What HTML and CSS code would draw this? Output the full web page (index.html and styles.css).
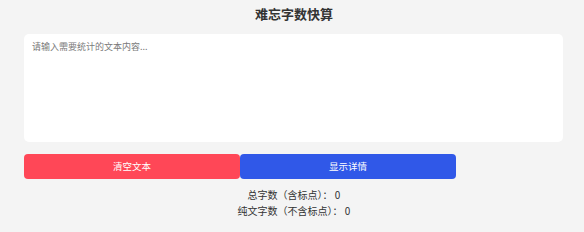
FILE: index.html
```html
<!DOCTYPE html>
<html lang="zh-CN">
<head>
<meta charset="utf-8">
<title>难忘字数快算</title>
<link rel="stylesheet" href="styles.css">
</head>
<body>
<div class="app">
  <h1 class="title">难忘字数快算</h1>
  <textarea class="input" placeholder="请输入需要统计的文本内容..." autofocus></textarea>
  <div class="actions">
    <button class="btn btn-clear">清空文本</button>
    <button class="btn btn-detail">显示详情</button>
  </div>
  <div class="stats">
    <div class="stat">总字数（含标点）： 0</div>
    <div class="stat">纯文字数（不含标点）： 0</div>
  </div>
</div>
</body>
</html>
```

FILE: styles.css
```css
html, body {
  margin: 0;
  padding: 0;
  background: #f4f4f4;
  font-family: "Noto Sans CJK SC", "Noto Sans", sans-serif;
  color: #333;
}

.app {
  width: 540px;
  margin-left: 24px;
  padding-top: 4px;
  display: flex;
  flex-direction: column;
}

.title {
  margin: 0 0 10px;
  font-size: 13px;
  line-height: 20px;
  font-weight: 700;
  text-align: center;
  color: #333;
}

.input {
  display: block;
  box-sizing: border-box;
  width: 539px;
  height: 108px;
  margin: 0;
  padding: 6px 8px;
  border: none;
  border-radius: 5px;
  background: #fff;
  resize: none;
  outline: none;
  font-family: "Noto Sans CJK SC", "Noto Sans", sans-serif;
  font-size: 9px;
  line-height: 14px;
  color: #333;
  caret-color: #3058e8;
}

.input::placeholder {
  color: #7a7a7a;
}

.actions {
  display: flex;
  margin-top: 12px;
}

.btn {
  flex: 0 0 216px;
  height: 25px;
  margin: 0;
  padding: 0;
  border: none;
  border-radius: 4px;
  color: #fff;
  font-family: "Noto Sans CJK SC", "Noto Sans", sans-serif;
  font-size: 9.5px;
  line-height: 25px;
  text-align: center;
}

.btn-clear {
  background: #ff4757;
}

.btn-detail {
  background: #3058e8;
}

.stats {
  margin-top: 8px;
  display: flex;
  flex-direction: column;
  align-items: center;
}

.stat {
  font-size: 10px;
  line-height: 16px;
  color: #333;
}
```
